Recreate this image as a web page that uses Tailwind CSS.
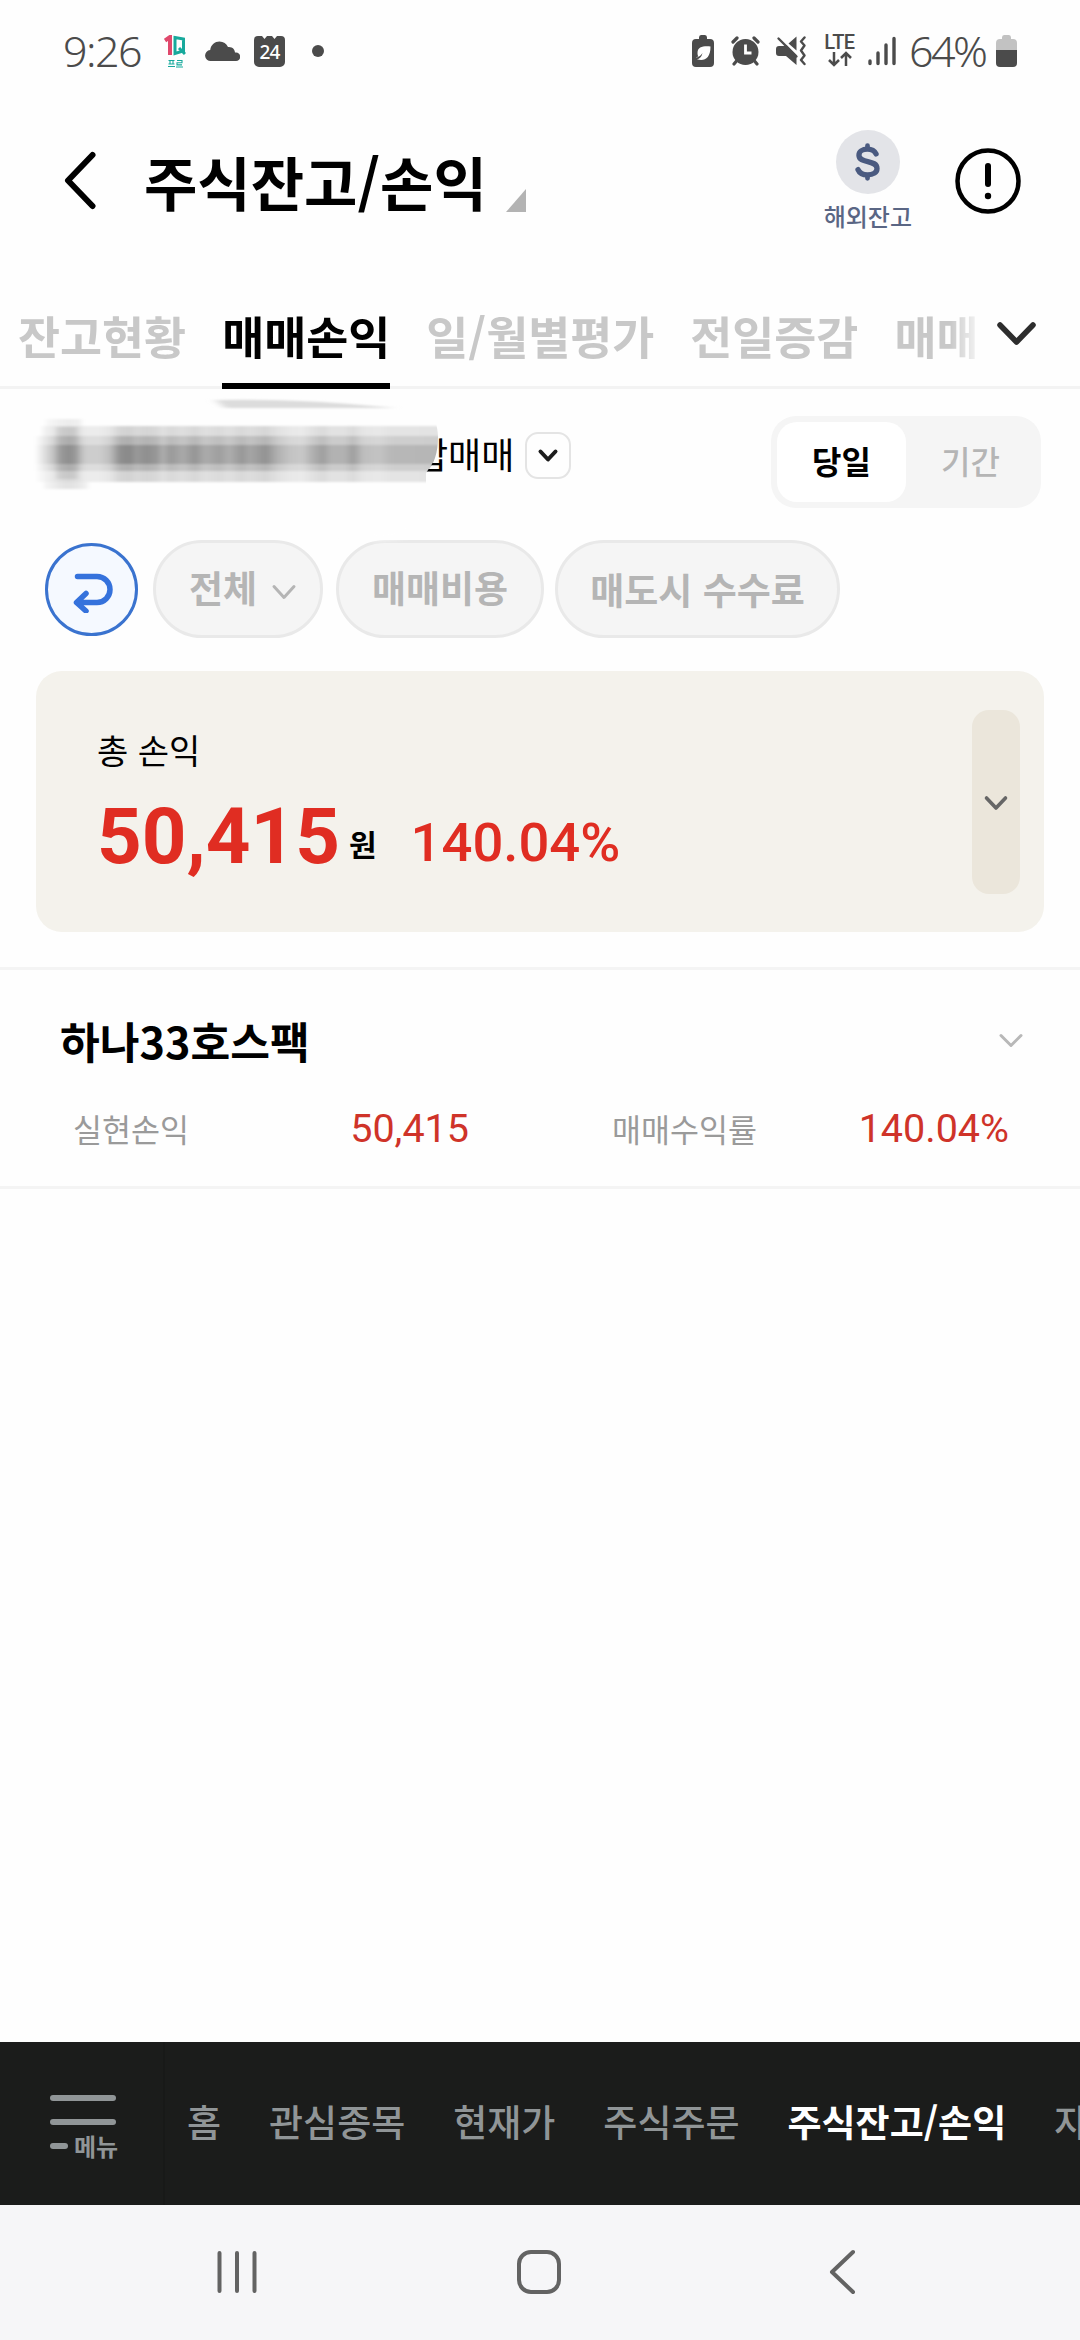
<!DOCTYPE html>
<html lang="ko">
<head>
<meta charset="utf-8">
<title>주식잔고/손익</title>
<script src="https://cdn.jsdelivr.net/npm/@tailwindcss/browser@4"></script>
</head>
<body class="bg-[#fefefe] text-black font-['Noto_Sans_CJK_KR',sans-serif]">
<main class="relative w-[1080px] h-[2340px] overflow-hidden flex flex-col whitespace-nowrap">

  <!-- status bar -->
  <header class="h-[100px] shrink-0 flex items-center pt-[2px] pl-[63px] pr-[63px] text-[#4b4b4b]">
    <span class="w-[82px] text-[43px] leading-[60px] font-light font-['Noto_Sans',sans-serif] tracking-[-1.5px]">9:26</span>
    <svg class="ml-[19px] w-[22px] h-[33px]" viewBox="0 0 22 33">
      <path d="M1 5.500L6 2v18" fill="none" stroke="#e0486c" stroke-width="4"/>
      <path d="M11 2.500L19.500 4v12L11 18.500zM15 13l6 6" fill="none" stroke="#17a99c" stroke-width="3"/>
      <path d="M4.500 25.500h6M6 25.500v3.500M9 25.500v3.500M4.500 29h6M4 31.500h7M13 25.500h5v2.200h-5v2.200h5M12 32h7" fill="none" stroke="#17a99c" stroke-width="1.100"/>
    </svg>
    <svg class="ml-[19px] w-[35px] h-[21px]" viewBox="0 0 35 21" fill="currentColor"><path d="M6 20a5.500 5.500 0 0 1-.8-11C6 3.500 10 .5 14.500.5c4 0 7 2.200 8.500 5.500 4.500-.5 7 2.500 7 6a4.200 4.200 0 0 1-.5 8z"/><path d="M28 11.500h3a4 4 0 0 1 0 8.500h-4z"/></svg>
    <svg class="ml-[14px] w-[31px] h-[32px]" viewBox="0 0 31 32">
      <path d="M4 1h4l2.500 3L13 1h5l2.500 3L23 1h4a4 4 0 0 1 4 4v22a5 5 0 0 1-5 5H5a5 5 0 0 1-5-5V5a4 4 0 0 1 4-4z" fill="#4b4b4b"/>
      <text x="15.500" y="24" text-anchor="middle" font-family="Noto Sans" font-size="19" font-weight="500" letter-spacing="-.8" fill="#fff">24</text>
    </svg>
    <span class="ml-[27px] w-3 h-3 rounded-full bg-[#4b4b4b]"></span>

    <svg class="ml-auto w-[22px] h-[32px]" viewBox="0 0 22 32">
      <path d="M7 4V2.500Q7 0 9 0h4q2 0 2 2.500V4h3a4 4 0 0 1 4 4v20a4 4 0 0 1-4 4H4a4 4 0 0 1-4-4V8a4 4 0 0 1 4-4z" fill="#4b4b4b"/>
      <path d="M3.500 22.500c3-.2 5-1.500 7-4.500-1 4-3 6-5.500 6.300 7 2 13.500-.3 13.500-12.800-7-.5-13 0-13 6.500 0 1.500.3 2.500.8 3.500z" fill="#fff"/>
    </svg>
    <svg class="ml-[17px] w-[29px] h-[30px]" viewBox="0 0 29 30">
      <circle cx="14.500" cy="16" r="13" fill="#4b4b4b"/>
      <path d="M2 6l4-4M27 6l-4-4M5.500 25L3 28M23.500 25l2.500 3" stroke="#4b4b4b" stroke-width="3.200" stroke-linecap="round"/>
      <path d="M14.500 8.500V17h6" fill="none" stroke="#fff" stroke-width="2.800"/>
    </svg>
    <svg class="ml-[16px] w-[30px] h-[30px]" viewBox="0 0 30 30">
      <path d="M3 10h4.500l3-1 10 10v10L10 20H3q-3 0-3-3v-4q0-3 3-3zM12.500 7.500l8-7v14z" fill="#4b4b4b"/>
      <path d="M2.500 2.500l18 18" stroke="#4b4b4b" stroke-width="2.400" stroke-linecap="round"/>
      <path d="M28.500 1.500l-3.500 4 3.500 4-3.500 5 3.500 5-3.500 4.500 3.500 4" fill="none" stroke="#4b4b4b" stroke-width="2.400" stroke-linejoin="round" stroke-linecap="round"/>
    </svg>
    <div class="ml-[17px] w-[33px] h-[34px] flex flex-col items-center">
      <span class="h-[17px] text-[20px] leading-[16px] font-medium font-['Roboto',sans-serif] tracking-[-0.5px]">LTE</span>
      <svg class="w-[26px] h-[16px]" viewBox="0 0 26 16" fill="none" stroke="#4b4b4b" stroke-width="2.500"><path d="M7 1v13M2 9l5 5 5-5M19 15V2M14 7l5-5 5 5"/></svg>
    </div>
    <svg class="ml-[12px] w-[28px] h-[30px]" viewBox="0 0 28 30" stroke="#4b4b4b" stroke-width="3.400" stroke-linecap="round"><path d="M2 25v2.500M10 17v10.500M18 9v18.500M26 2.500v25"/></svg>
    <span class="ml-[13px] w-[82px] text-[43px] leading-[60px] font-light font-['Noto_Sans',sans-serif] tracking-[-2.500px]">64%</span>
    <svg class="ml-[5px] w-[21px] h-[32px]" viewBox="0 0 21 32">
      <path d="M6 4V2.500Q6 0 8 0h5q2 0 2 2.500V4h2a4 4 0 0 1 4 4v8H0V8a4 4 0 0 1 4-4z" fill="#c2c2c2"/>
      <path d="M0 15h21v13a4 4 0 0 1-4 4H4a4 4 0 0 1-4-4z" fill="#4b4b4b"/>
    </svg>
  </header>

  <!-- title bar -->
  <section class="h-[160px] shrink-0 flex items-center pt-[2px] pl-[63px] pr-[58px]">
    <svg class="w-[34px] h-[60px]" viewBox="0 0 34 60" fill="none" stroke="#000" stroke-width="6" stroke-linecap="round" stroke-linejoin="round"><path d="M29.500 4L5 29.500 29.500 55"/></svg>
    <h1 class="ml-[47px] text-[58px] leading-[84px] font-bold">주식잔고/손익</h1>
    <svg class="ml-[19px] mt-[39px] w-[20px] h-[23px]" viewBox="0 0 20 23"><path d="M20 0v23H0z" fill="#b3b3b3"/></svg>
    <div class="ml-auto flex flex-col items-center">
      <div class="w-[64px] h-[64px] rounded-full bg-[#e3e4e8] flex items-center justify-center">
        <svg class="w-[25px] h-[38px]" viewBox="0 0 26 40" fill="none" stroke="#4a5a80" stroke-linecap="round"><path d="M22 11.500C20.500 8.500 17.500 6.500 13 6.500c-5.500 0-9 2.500-9 6.300 0 9.200 19 4.200 19 14 0 4.200-4 6.700-10 6.700-5 0-8.500-2-10-5.500" stroke-width="5.600"/><path d="M13 2.800v3M13 34.200v3" stroke-width="5"/></svg>
      </div>
      <span class="mt-[5px] text-[24px] leading-[34px] font-medium text-[#5a6684]">해외잔고</span>
    </div>
    <svg class="ml-[42px] w-[68px] h-[68px]" viewBox="0 0 68 68" fill="none" stroke="#000" stroke-linecap="round"><circle cx="34" cy="34" r="30.500" stroke-width="4.500"/><path d="M34 19v18" stroke-width="6"/><circle cx="34" cy="49" r="3.200" fill="#000" stroke="none"/></svg>
  </section>

  <!-- tabs -->
  <nav class="h-[129px] shrink-0 border-b-[3px] border-[#f3f3f3] flex text-[45.7px] leading-[66px] font-bold text-[#c8c8c8]">
    <div class="w-[976px] flex gap-[36px] pl-[18px] pt-[42px] h-[129px] overflow-hidden [mask-image:linear-gradient(to_right,black_950px,transparent_984px)]">
      <span>잔고현황</span>
      <span class="relative h-[87px] text-black border-b-[6px] border-black">매매손익</span>
      <span>일/월별평가</span>
      <span>전일증감</span>
      <span>매매</span>
    </div>
    <svg class="ml-[18px] mt-[59px] w-[46px] h-[30px]" viewBox="0 0 46 30" fill="none" stroke="#2d2d2d" stroke-width="5.500" stroke-linecap="round" stroke-linejoin="round"><path d="M6 6l16.500 17L39 6"/></svg>
  </nav>

  <!-- account row -->
  <section class="relative h-[151px] shrink-0 flex items-start pl-[415px] pr-[39px]">
    <span class="mt-[38px] text-[36px] leading-[52px]">합매매</span>
    <span class="ml-[11px] mt-[43px] w-[46px] h-[47px] rounded-[13px] border-[2.500px] border-[#e4e4e4] flex items-center justify-center">
      <svg class="w-[24px] h-[16px]" viewBox="0 0 24 16" fill="none" stroke="#1c1c1c" stroke-width="4" stroke-linecap="round" stroke-linejoin="round"><path d="M4.500 3.500l7.500 8 7.500-8"/></svg>
    </span>
    <div class="ml-auto mt-[27px] w-[270px] h-[92px] rounded-[25px] bg-[#f5f5f5] p-[6px] flex text-[32px] leading-[46px] font-bold">
      <span class="w-[129px] h-[80px] rounded-[20px] bg-white pt-[15px] text-center">당일</span>
      <span class="w-[129px] pt-[15px] text-center text-[#b5b5b5] font-medium">기간</span>
    </div>
    <!-- smudge over the account number -->
    <svg class="absolute left-0 top-0 z-10 w-[450px] h-[165px]" viewBox="0 0 450 165">
      <defs>
        <filter id="rows" x="-5%" y="-20%" width="110%" height="140%"><feGaussianBlur stdDeviation="2 1.200"/></filter>
        <filter id="thin" x="-10%" y="-200%" width="120%" height="500%"><feGaussianBlur stdDeviation="5 1.200"/></filter>
        <filter id="veil" x="-10%" y="-50%" width="120%" height="200%"><feGaussianBlur stdDeviation="5 2"/></filter>
        <clipPath id="edge"><path d="M0 0H425Q438 34 438 48 438 72 426 84V130L400 165H0z"/></clipPath>
        <linearGradient id="cols" x1="35" x2="440" y1="0" y2="0" gradientUnits="userSpaceOnUse">
          <stop offset="0" stop-opacity="0"/><stop offset=".04" stop-opacity=".45"/><stop offset=".065" stop-opacity=".75"/><stop offset=".085" stop-opacity=".85"/><stop offset=".105" stop-opacity=".7"/><stop offset=".125" stop-opacity=".42"/><stop offset=".16" stop-opacity=".42"/><stop offset=".185" stop-opacity=".55"/><stop offset=".21" stop-opacity=".95"/><stop offset=".235" stop-opacity="1"/><stop offset=".25" stop-opacity=".85"/><stop offset=".275" stop-opacity=".95"/><stop offset=".3" stop-opacity=".88"/><stop offset=".315" stop-opacity=".68"/><stop offset=".335" stop-opacity=".86"/><stop offset=".365" stop-opacity=".72"/><stop offset=".395" stop-opacity=".9"/><stop offset=".42" stop-opacity=".7"/><stop offset=".455" stop-opacity=".82"/><stop offset=".48" stop-opacity=".68"/><stop offset=".51" stop-opacity=".88"/><stop offset=".53" stop-opacity=".75"/><stop offset=".57" stop-opacity=".92"/><stop offset=".6" stop-opacity=".65"/><stop offset=".63" stop-opacity=".5"/><stop offset=".66" stop-opacity=".46"/><stop offset=".68" stop-opacity=".62"/><stop offset=".71" stop-opacity=".82"/><stop offset=".73" stop-opacity=".65"/><stop offset=".765" stop-opacity=".65"/><stop offset=".785" stop-opacity=".82"/><stop offset=".81" stop-opacity=".55"/><stop offset=".85" stop-opacity=".5"/><stop offset=".88" stop-opacity=".6"/><stop offset="1" stop-opacity=".62"/>
        </linearGradient>
      </defs>
      <g clip-path="url(#edge)">
        <path d="M30 25Q180 5 425 25L450 48 426 84V120L400 149 300 142 40 140z" fill="#fefefe"/>
        <g filter="url(#rows)" fill="url(#cols)">
          <rect x="42" y="37" width="410" height="10" opacity=".17"/>
          <rect x="35" y="47" width="415" height="9" opacity=".31"/>
          <rect x="35" y="56" width="415" height="19" opacity=".46"/>
          <rect x="35" y="75" width="415" height="7" opacity=".31"/>
          <rect x="37" y="82" width="415" height="11" opacity=".17"/>
          <rect x="46" y="30" width="36" height="7" opacity=".08"/>
          <rect x="44" y="93" width="44" height="7" opacity=".13"/>
          <rect x="56" y="38" width="22" height="52" opacity=".1"/>
        </g>
      </g>
      <path d="M340 144Q380 156 410 146L425 120 380 120z" fill="#fefefe" filter="url(#veil)"/>
      <path d="M215 11Q300 9 395 19L225 19z" fill="#dcdcdc" filter="url(#thin)"/>
      <path d="M68 140h32" stroke="#eef3fd" stroke-width="2" filter="url(#thin)"/>
    </svg>
  </section>

  <!-- filter chips -->
  <section class="h-[98px] shrink-0 flex items-center pl-[45px] text-[37px] leading-[54px] font-bold text-[#b5b5b5]">
    <span class="w-[93px] h-[93px] rounded-full border-[3px] border-[#3a73cf] bg-[#f5f9ff] flex items-center justify-center">
      <svg class="mt-[3px] w-[44px] h-[44px]" viewBox="0 0 44 44" fill="none" stroke="#3572dc" stroke-width="5.500" stroke-linecap="round" stroke-linejoin="round"><path d="M7.500 7.500H27a13 13 0 0 1 0 26H7.500M16 24.500L6.500 33.500l9.500 8.500"/></svg>
    </span>
    <span class="ml-[15px] w-[170px] h-[98px] rounded-full border-[3px] border-[#e9e9e9] bg-[#f5f5f5] flex items-center pl-[33px] pb-[4px]">전체
      <svg class="ml-[13px] mt-[9px] w-[28px] h-[20px]" viewBox="0 0 28 20" fill="none" stroke="#b5b5b5" stroke-width="3" stroke-linecap="round" stroke-linejoin="round"><path d="M4 4.500l10 11 10-11"/></svg>
    </span>
    <span class="ml-[13px] w-[208px] h-[98px] rounded-full border-[3px] border-[#e9e9e9] bg-[#f5f5f5] flex items-center justify-center pb-[4px]">매매비용</span>
    <span class="ml-[11px] w-[285px] h-[98px] rounded-full border-[3px] border-[#e9e9e9] bg-[#f5f5f5] flex items-center justify-center">매도시 수수료</span>
  </section>

  <!-- total profit card -->
  <section class="mt-[33px] mx-[36px] h-[261px] shrink-0 rounded-[26px] bg-[#f4f2ec] flex items-center pl-[61px] pr-[24px]">
    <div class="self-start pt-[53px]">
      <p class="text-[34px] leading-[52px]">총 손익</p>
      <div class="flex items-baseline mt-[15px] text-[#e02d22] font-['Roboto',sans-serif]">
        <span class="text-[78px] leading-[92px] font-bold">50,415</span>
        <span class="relative top-[-7px] ml-[9px] text-[30px] leading-[44px] font-bold text-black font-['Noto_Sans_CJK_KR',sans-serif]">원</span>
        <span class="relative top-[-2px] ml-[34px] text-[54.400px] leading-[64px] font-medium">140.04%</span>
      </div>
    </div>
    <button class="ml-auto w-[48px] h-[184px] rounded-[17px] bg-[#ebe6db] flex items-center justify-center">
      <svg class="mt-[2px] w-[28px] h-[20px]" viewBox="0 0 28 20" fill="none" stroke="#666" stroke-width="3.600" stroke-linecap="round" stroke-linejoin="round"><path d="M4.500 5l9.500 10L23.500 5"/></svg>
    </button>
  </section>

  <!-- stock entry -->
  <section class="mt-[35px] h-[222px] shrink-0 border-y-[3px] border-[#f4f4f4] pl-[60px] pr-[55px]">
    <div class="mt-[38px] flex items-center justify-between">
      <h2 class="text-[43.2px] leading-[64px] font-bold">하나33호스팩</h2>
      <svg class="mt-[2px] w-[28px] h-[20px]" viewBox="0 0 28 20" fill="none" stroke="#b8b8b8" stroke-width="3" stroke-linecap="round" stroke-linejoin="round"><path d="M4 4.500l10 10 10-10"/></svg>
    </div>
    <div class="mt-[33px] pl-[13px] pr-[16px] flex items-baseline text-[31.500px] leading-[46px] text-[#9a9a9a]">
      <span class="w-[112px]">실현손익</span>
      <span class="w-[284px] text-right text-[39.500px] text-[#cf3329] font-['Roboto',sans-serif]">50,415</span>
      <span class="ml-[143px]">매매수익률</span>
      <span class="ml-auto text-[39.500px] text-[#cf3329] font-['Roboto',sans-serif]">140.04%</span>
    </div>
  </section>

  <!-- app menu bar -->
  <footer class="mt-auto h-[163px] shrink-0 bg-[#1b1c1b] flex overflow-hidden text-[#909597]">
    <div class="w-[165px] shrink-0 border-r-2 border-[#181918] pl-[50px] pt-[53px]">
      <div class="w-[66px] h-[6px] rounded-full bg-[#909597]"></div>
      <div class="mt-[18px] w-[66px] h-[6px] rounded-full bg-[#909597]"></div>
      <div class="mt-[3px] flex items-center"><span class="w-[18px] h-[6px] rounded-full bg-[#909597]"></span><span class="ml-[6px] text-[24px] leading-[36px] font-bold">메뉴</span></div>
    </div>
    <div class="pl-[22px] pt-[52px] flex gap-[48px] text-[37px] leading-[54px] font-medium">
      <span>홈</span><span>관심종목</span><span>현재가</span><span>주식주문</span><span class="text-white font-bold">주식잔고/손익</span><span>자</span>
    </div>
  </footer>

  <!-- system navigation -->
  <nav class="h-[135px] shrink-0 bg-[#f6f6f8] flex items-center pl-[215px] pb-[1px]">
    <svg class="w-[44px] h-[48px]" viewBox="0 0 44 48" stroke="#636363" stroke-width="4" stroke-linecap="round"><path d="M4.500 5v38M22 5v38M39.500 5v38"/></svg>
    <svg class="ml-[256px] w-[48px] h-[48px]" viewBox="0 0 48 48" fill="none" stroke="#636363" stroke-width="4"><rect x="4" y="4" width="40" height="40" rx="12"/></svg>
    <svg class="ml-[265px] w-[32px] h-[48px]" viewBox="0 0 32 48" fill="none" stroke="#636363" stroke-width="4" stroke-linecap="round" stroke-linejoin="round"><path d="M25 4L4 24l21 20"/></svg>
  </nav>
</main>
</body>
</html>
